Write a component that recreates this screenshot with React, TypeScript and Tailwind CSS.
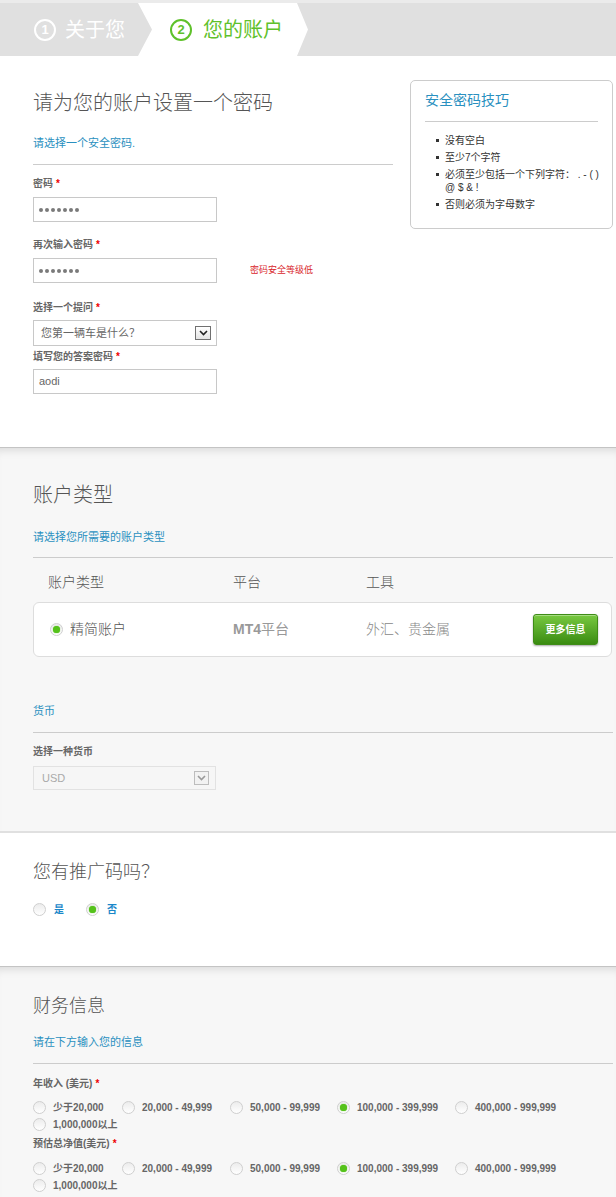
import React from "react";

function Radio({ checked }: { checked?: boolean }) {
  return (
    <span className="flex h-[13px] w-[13px] shrink-0 items-center justify-center rounded-full border border-[#cfcfcf] bg-gradient-to-b from-[#ececec] to-white">
      {checked && <span className="h-[7px] w-[7px] rounded-full bg-[#55c21b] shadow-[0_0_1px_#55c21b]" />}
    </span>
  );
}

function Star() {
  return <span className="ml-[3px] text-[#e00]">*</span>;
}

function Label({ children, className = "" }: { children: React.ReactNode; className?: string }) {
  return (
    <div className={"text-[10px] font-bold leading-[14px] text-[#666] " + className}>
      {children}
      <Star />
    </div>
  );
}

function Dots() {
  return (
    <div className="flex gap-[2px]">
      {[0, 1, 2, 3, 4, 5, 6].map((i) => (
        <span key={i} className="h-[4px] w-[4px] rounded-full bg-[#7a7a7a]" />
      ))}
    </div>
  );
}

function Chevron({ color }: { color: string }) {
  return (
    <svg width="9" height="6" viewBox="0 0 9 6">
      <path d="M1 1 L4.5 4.5 L8 1" fill="none" stroke={color} strokeWidth="1.6" />
    </svg>
  );
}

function OptionRow({ checkedIndex }: { checkedIndex: number }) {
  const items = [
    { t: "少于20,000", w: "w-[89px]" },
    { t: "20,000 - 49,999", w: "w-[108px]" },
    { t: "50,000 - 99,999", w: "w-[107px]" },
    { t: "100,000 - 399,999", w: "w-[118px]" },
    { t: "400,000 - 999,999", w: "w-[117px]" },
    { t: "1,000,000以上", w: "w-[110px]" },
  ];
  return (
    <div className="flex flex-wrap">
      {items.map((it, i) => (
        <div key={i} className={"flex h-[17px] items-center gap-[7px] " + it.w}>
          <Radio checked={i === checkedIndex} />
          <span className="whitespace-nowrap text-[10px] font-bold text-[#666]">{it.t}</span>
        </div>
      ))}
    </div>
  );
}

export default function App() {
  return (
    <div className="min-h-[1197px] bg-[#f7f7f7] font-['Liberation_Sans','Noto_Sans_CJK_SC',sans-serif]">
      {/* Steps */}
      <div className="bg-[#ebebeb] pt-[3px]">
        <div className="flex h-[53px] bg-[#e0e0e0]">
          <div className="flex w-[138px] items-center pl-[34px]">
            <span className="flex h-[22px] w-[22px] items-center justify-center rounded-full border-2 border-white text-[13px] font-bold text-white">
              1
            </span>
            <span className="ml-[9px] text-[20px] leading-[24px] text-white">关于您</span>
          </div>
          <div className="flex w-[170px] items-center bg-white pl-[32px] [clip-path:polygon(0_0,159px_0,170px_50%,159px_100%,0_100%,14px_50%)]">
            <span className="flex h-[22px] w-[22px] items-center justify-center rounded-full border-2 border-[#5fc12b] text-[13px] font-bold text-[#5fc12b]">
              2
            </span>
            <span className="ml-[11px] text-[20px] leading-[24px] text-[#5fc12b]">您的账户</span>
          </div>
        </div>
      </div>

      {/* Section 1 */}
      <div className="flex border-b border-[#c4c4c4] bg-white pb-[53px] pl-[33px] pr-[3px]">
        <div className="w-[360px] pt-[35px]">
          <h2 className="text-[20px] font-light leading-[24px] text-[#555]">请为您的账户设置一个密码</h2>
          <p className="mt-[20px] text-[11px] leading-[16px] text-[#2a90c0]">请选择一个安全密码.</p>
          <div className="mt-[13px] border-t border-[#cccccc]" />
          <Label className="mt-[12px]">密码</Label>
          <div className="mt-[6px] flex h-[25px] w-[184px] items-center border border-[#c8c8c8] bg-white pl-[5px]">
            <Dots />
          </div>
          <Label className="mt-[16px]">再次输入密码</Label>
          <div className="mt-[6px] flex items-center">
            <div className="flex h-[25px] w-[184px] items-center border border-[#c8c8c8] bg-white pl-[5px]">
              <Dots />
            </div>
            <span className="ml-[33px] text-[9px] text-[#d9262b]">密码安全等级低</span>
          </div>
          <Label className="mt-[18px]">选择一个提问</Label>
          <div className="mt-[5px] flex h-[26px] w-[184px] items-center justify-between border border-[#c8c8c8] bg-white pl-[7px] pr-[5px]">
            <span className="text-[11px] text-[#666]">您第一辆车是什么？</span>
            <span className="flex h-[14px] w-[16px] items-center justify-center border border-[#707070] bg-gradient-to-b from-white to-[#e4e4e4]">
              <Chevron color="#222" />
            </span>
          </div>
          <Label className="mt-[4px]">填写您的答案密码</Label>
          <div className="mt-[5px] flex h-[25px] w-[184px] items-center border border-[#c8c8c8] bg-white pl-[5px] text-[11px] text-[#666]">
            aodi
          </div>
        </div>
        <div className="ml-[17px] pt-[24px]">
          <div className="w-[203px] rounded-[5px] border border-[#cccccc] bg-white pb-[17px] pt-[10px]">
            <div className="pl-[14px] text-[14px] leading-[18px] text-[#2a90c0]">安全密码技巧</div>
            <div className="mx-[14px] mt-[12px] border-t border-[#cccccc]" />
            <ul className="mt-[12px] text-[10px] leading-[13px] text-[#333]">
              {[
                <>没有空白</>,
                <>至少7个字符</>,
                <>
                  必须至少包括一个下列字符： . - ( )
                  <br />@ $ &amp; !
                </>,
                <>否则必须为字母数字</>,
              ].map((c, i) => (
                <li key={i} className="mb-[4px] flex last:mb-0">
                  <span className="ml-[25px] mt-[5px] h-[3px] w-[3px] shrink-0 bg-[#333]" />
                  <span className="ml-[6px] whitespace-nowrap">{c}</span>
                </li>
              ))}
            </ul>
          </div>
        </div>
      </div>

      {/* Section 2 */}
      <div className="bg-[#f7f7f7] pb-[41px] pl-[33px] pr-[3px] pt-[35px] shadow-[inset_0_9px_10px_-7px_rgba(0,0,0,0.13)]">
        <h2 className="text-[20px] font-light leading-[24px] text-[#555]">账户类型</h2>
        <p className="mt-[22px] text-[11px] leading-[16px] text-[#2a90c0]">请选择您所需要的账户类型</p>
        <div className="mt-[12px] border-t border-[#cccccc]" />
        <div className="mt-[15px] flex pl-[15px] text-[14px] font-light leading-[18px] text-[#555]">
          <span className="w-[185px]">账户类型</span>
          <span className="w-[133px]">平台</span>
          <span>工具</span>
        </div>
        <div className="mt-[11px] flex h-[55px] w-[579px] items-center rounded-[6px] border border-[#dddddd] bg-white pl-[16px] pr-[13px]">
          <div className="flex w-[183px] items-center gap-[7px]">
            <Radio checked />
            <span className="text-[14px] font-light text-[#555]">精简账户</span>
          </div>
          <span className="w-[133px] text-[14px] text-[#999]">
            <span className="font-bold">MT4</span>平台
          </span>
          <span className="flex-1 text-[14px] font-light text-[#888]">外汇、贵金属</span>
          <button className="flex h-[31px] w-[65px] items-center justify-center rounded-[3px] border border-[#3f8c17] bg-gradient-to-b from-[#78c940] to-[#3a8c10] text-[10px] font-bold text-white shadow-[0_1px_2px_rgba(0,0,0,0.35),inset_0_1px_0_rgba(255,255,255,0.35)]">
            更多信息
          </button>
        </div>
        <p className="mt-[46px] text-[11px] leading-[16px] text-[#2a90c0]">货币</p>
        <div className="mt-[13px] border-t border-[#cccccc]" />
        <div className="mt-[12px] text-[10px] font-bold leading-[14px] text-[#666]">选择一种货币</div>
        <div className="mt-[7px] flex h-[24px] w-[183px] items-center justify-between border border-[#e2e2e2] bg-[#f6f6f6] pl-[8px] pr-[6px]">
          <span className="text-[11px] text-[#aaa]">USD</span>
          <span className="flex h-[14px] w-[15px] items-center justify-center border border-[#bdbdbd] bg-[#f2f2f2]">
            <Chevron color="#9a9a9a" />
          </span>
        </div>
      </div>

      {/* Section 3 */}
      <div className="border-b border-t-2 border-b-[#c4c4c4] border-t-[#e0e0e0] bg-white pb-[49px] pl-[33px] pt-[28px]">
        <h2 className="text-[18px] font-light leading-[22px] text-[#555]">您有推广码吗？</h2>
        <div className="mt-[18px] flex h-[16px] items-center">
          <Radio />
          <span className="ml-[8px] text-[10px] font-bold text-[#1a87c9]">是</span>
          <span className="ml-[22px]">
            <Radio checked />
          </span>
          <span className="ml-[8px] text-[10px] font-bold text-[#1a87c9]">否</span>
        </div>
      </div>

      {/* Section 4 */}
      <div className="bg-[#f7f7f7] pb-[30px] pl-[33px] pr-[3px] pt-[28px] shadow-[inset_0_9px_10px_-7px_rgba(0,0,0,0.13)]">
        <h2 className="text-[18px] font-light leading-[22px] text-[#555]">财务信息</h2>
        <p className="mt-[17px] text-[11px] leading-[16px] text-[#2a90c0]">请在下方输入您的信息</p>
        <div className="mt-[13px] border-t border-[#cccccc]" />
        <Label className="mt-[13px]">年收入 (美元)</Label>
        <div className="mt-[8px]">
          <OptionRow checkedIndex={3} />
        </div>
        <Label className="mt-[4px]">预估总净值(美元)</Label>
        <div className="mt-[9px]">
          <OptionRow checkedIndex={3} />
        </div>
      </div>
    </div>
  );
}
